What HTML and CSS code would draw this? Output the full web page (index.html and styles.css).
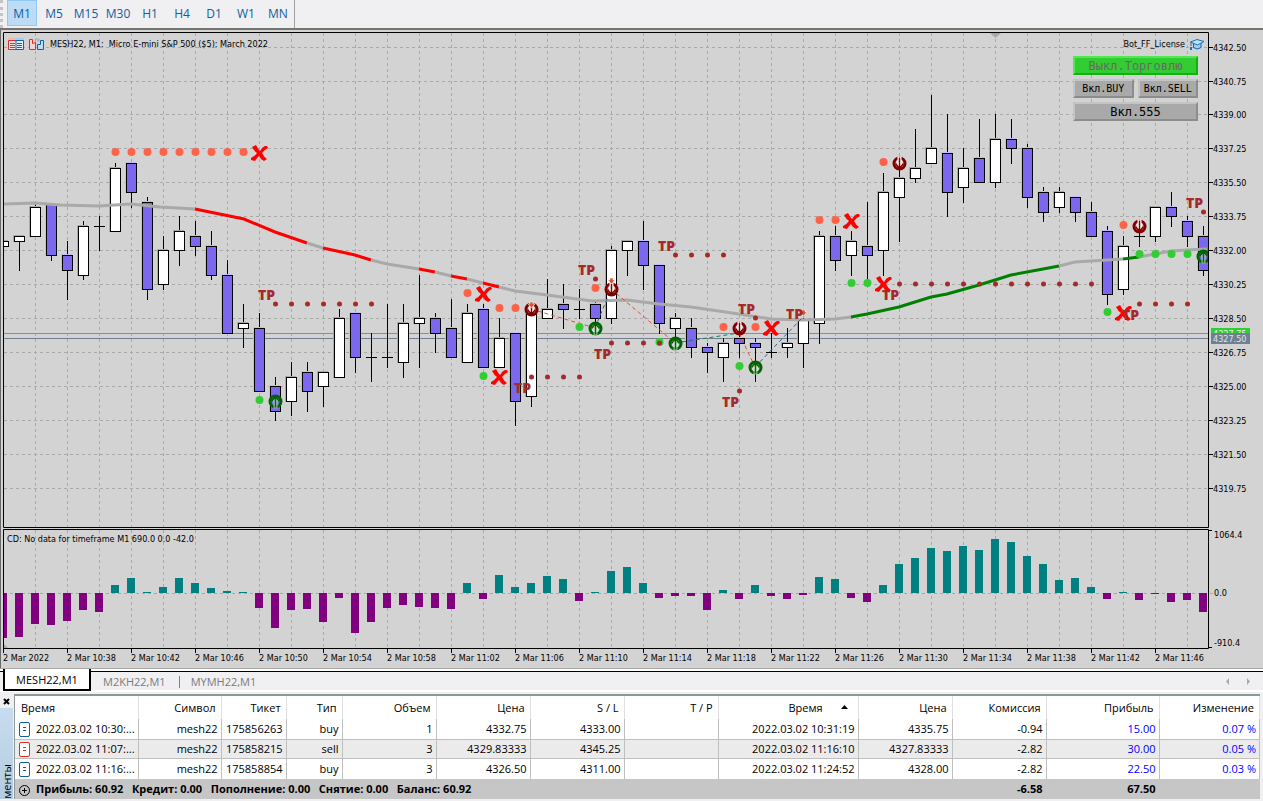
FILE: index.html
```html
<!DOCTYPE html>
<html lang="ru">
<head>
    <meta charset="UTF-8">
    <meta name="viewport" content="width=device-width, initial-scale=1.0">
    <title>MESH22, M1</title>
    <link rel="stylesheet" href="styles.css">
</head>
<body>

<nav class="toolbar">
    <button class="tf active">M1</button>
    <button class="tf">M5</button>
    <button class="tf">M15</button>
    <button class="tf">M30</button>
    <button class="tf">H1</button>
    <button class="tf">H4</button>
    <button class="tf">D1</button>
    <button class="tf">W1</button>
    <button class="tf">MN</button>
</nav>

<main class="chart">
    <svg id="chart" viewBox="0 30 1263 638"></svg>

    <div class="chart-title">
        <svg width="16" height="13" viewBox="0 0 16 13">
            <rect x="0" y="0" width="8" height="2" fill="#f0b8b4"/>
            <rect x="8" y="0" width="8" height="2" fill="#a9cde6"/>
            <path d="M8 2.500H.5v9H8" fill="#f7e4e2" stroke="#d9302c"/>
            <path d="M8 2.500h7.500v9H8z" fill="#e4f1fa" stroke="#0f63a8"/>
            <path d="M2 5.500h5M2 7.500h5M2 9.500h5" stroke="#d9302c"/>
            <path d="M9 5.500h5M9 7.500h5M9 9.500h5" stroke="#0f63a8"/>
        </svg>
        <svg width="16" height="13" viewBox="0 0 16 13">
            <path d="M.5 1.500h3v4l3-1v7h-6z" fill="#f7d4d0" stroke="#d9302c"/>
            <path d="M6 1h4v2H8" fill="none" stroke="#a9a9a9"/>
            <path d="M8.500 11.500v-5h3v-4h3v9z" fill="#b9dcf2" stroke="#0f63a8"/>
        </svg>
        <span>MESH22, M1:&nbsp; Micro E-mini S&amp;P 500 ($5): March 2022</span>
    </div>

    <div class="expert">
        <span>Bot_FF_License</span>
        <svg width="16" height="13" viewBox="0 0 16 13">
            <path d="M4.500 5v4.500q4 3 7.500 0V5" fill="#9fd2f2" stroke="#0f63a8"/>
            <path d="M1.500 4L8 1.500 15 3.500 8.500 7z" fill="#bfe4fa" stroke="#1673b8"/>
            <path d="M2 4v4" stroke="#1673b8"/>
            <path d="M1 9h2v3H1z" fill="#1673b8"/>
        </svg>
    </div>

    <div class="bot-panel">
        <button class="bot-btn on">Выкл.Торговлю</button>
        <button class="bot-btn small">Вкл.BUY</button>
        <button class="bot-btn small">Вкл.SELL</button>
        <button class="bot-btn wide">Вкл.555</button>
    </div>

    <div class="indicator-title">CD: No data for timeframe M1 690.0 0.0 -42.0</div>
</main>

<div class="tabs">
    <button class="tab active">MESH22,M1</button>
    <button class="tab">M2KH22,M1</button>
    <button class="tab">MYMH22,M1</button>
    <svg class="tab-arrows" width="26" height="9" viewBox="0 0 26 9">
        <path d="M4 1v7L1 4.500zM22 1v7l3-3.500z" fill="#a9a9a9"/>
    </svg>
</div>

<section class="terminal">
    <div class="side">
        <button class="close" aria-label="Закрыть">
            <svg width="7" height="7" viewBox="0 0 7 7"><path d="M1 1l5 5M6 1L1 6" stroke="#000" stroke-width="2"/></svg>
        </button>
        <div class="side-label"><span>менты</span></div>
    </div>
    <table class="history">
        <colgroup>
            <col class="c-time"><col class="c-symbol"><col class="c-ticket"><col class="c-type">
            <col class="c-num"><col class="c-num"><col class="c-num"><col class="c-num">
            <col class="c-close"><col class="c-num"><col class="c-num"><col class="c-profit"><col>
        </colgroup>
        <thead>
            <tr>
                <th class="left">Время</th>
                <th>Символ</th>
                <th>Тикет</th>
                <th>Тип</th>
                <th>Объем</th>
                <th>Цена</th>
                <th>S / L</th>
                <th>T / P</th>
                <th class="sorted">Время<svg width="7" height="4" viewBox="0 0 7 4"><path d="M0 4h7L3.500 0z"/></svg></th>
                <th>Цена</th>
                <th>Комиссия</th>
                <th>Прибыль</th>
                <th>Изменение</th>
            </tr>
        </thead>
        <tbody>
            <tr>
                <td class="left"><svg class="doc buy" width="11" height="15" viewBox="0 0 11 15"><rect x=".5" y=".5" width="10" height="14" rx="1.500"/><path d="M4 5.500h3M4 8.500h3"/></svg>2022.03.02 10:30:...</td>
                <td>mesh22</td><td>175856263</td><td>buy</td><td>1</td><td>4332.75</td><td>4333.00</td><td></td>
                <td>2022.03.02 10:31:19</td><td>4335.75</td><td>-0.94</td>
                <td class="plus">15.00</td><td class="plus">0.07 %</td>
            </tr>
            <tr>
                <td class="left"><svg class="doc sell" width="11" height="15" viewBox="0 0 11 15"><rect x=".5" y=".5" width="10" height="14" rx="1.500"/><path d="M4 5.500h3M4 8.500h3"/></svg>2022.03.02 11:07:...</td>
                <td>mesh22</td><td>175858215</td><td>sell</td><td>3</td><td>4329.83333</td><td>4345.25</td><td></td>
                <td>2022.03.02 11:16:10</td><td>4327.83333</td><td>-2.82</td>
                <td class="plus">30.00</td><td class="plus">0.05 %</td>
            </tr>
            <tr>
                <td class="left"><svg class="doc buy" width="11" height="15" viewBox="0 0 11 15"><rect x=".5" y=".5" width="10" height="14" rx="1.500"/><path d="M4 5.500h3M4 8.500h3"/></svg>2022.03.02 11:16:...</td>
                <td>mesh22</td><td>175858854</td><td>buy</td><td>3</td><td>4326.50</td><td>4311.00</td><td></td>
                <td>2022.03.02 11:24:52</td><td>4328.00</td><td>-2.82</td>
                <td class="plus">22.50</td><td class="plus">0.03 %</td>
            </tr>
        </tbody>
        <tfoot>
            <tr>
                <td class="left" colspan="10"><svg class="plus-icon" width="11" height="11" viewBox="0 0 11 11"><circle cx="5.500" cy="5.500" r="5"/><path d="M3 5.500h5M5.500 3v5"/></svg>Прибыль: 60.92&nbsp;&nbsp; Кредит: 0.00&nbsp;&nbsp; Пополнение: 0.00&nbsp;&nbsp; Снятие: 0.00&nbsp;&nbsp; Баланс: 60.92</td>
                <td>-6.58</td>
                <td>67.50</td>
                <td></td>
            </tr>
        </tfoot>
    </table>
</section>

<script src="chart.js"></script>
</body>
</html>
```
FILE: styles.css
```css
* {
    box-sizing: border-box;
}
body {
    margin: 0;
    background-color: #f0eff2;
    font-family: "Open Sans", "Noto Sans", sans-serif;
    font-size: 11px;
    color: #000;
}
button {
    font-family: inherit;
    padding: 0;
    margin: 0;
    border: none;
    background: none;
    cursor: pointer;
}
svg {
    display: block;
}

/* Timeframes */
.toolbar {
    display: flex;
    gap: 2px;
    width: 295px;
    height: 28px;
    padding-left: 4px;
    border-left: 3px dotted #c4c4c8;
    border-right: 1px solid #a0a0a0;
}
.tf {
    width: 30px;
    height: 26px;
    font-size: 12px;
    color: #0f5f9f;
    border: 1px solid transparent;
}
.tf.active {
    background-color: #bcdcf6;
    border-color: #90c8f6;
}

/* Chart */
.chart {
    position: relative;
    border-top: 2px solid #75756f;
    background-color: #d3d3d3;
    font-family: "DejaVu Sans Condensed", "DejaVu Sans", sans-serif;
    font-size: 9px;
}
#chart {
    width: 100%;
    height: auto;
}
#chart text {
    font-size: 9px;
}
#chart .tp {
    font-family: "Open Sans", sans-serif;
    font-size: 14px;
    font-weight: 800;
    font-stretch: normal;
    fill: #a52a2a;
}
.grid {
    stroke: #a9a9a9;
    stroke-dasharray: 3 3;
}
.chart-title,
.expert {
    position: absolute;
    top: 7px;
    display: flex;
    align-items: center;
    gap: 5px;
    height: 14px;
}
.chart-title {
    left: 8px;
}
.expert {
    right: 58px;
    gap: 4px;
}
.indicator-title {
    position: absolute;
    left: 7px;
    bottom: 123px;
    line-height: 12px;
}
.bot-panel {
    position: absolute;
    top: 26px;
    right: 65px;
    width: 125px;
    display: grid;
    grid-template-columns: 1fr 1fr;
    gap: 4px;
}
.bot-btn {
    height: 19px;
    font-family: "DejaVu Sans Mono", monospace;
    font-size: 12px;
    line-height: 14px;
    background-color: #a9a9a9;
    border: 2px solid;
    border-color: #c4c4c4 #8c8c8c #8c8c8c #c4c4c4;
}
.bot-btn.on {
    grid-column: span 2;
    background-color: #32cd32;
    border-color: #50ea50 #12b012 #12b012 #50ea50;
    color: #696969;
}
.bot-btn.small {
    font-size: 10px;
}
.bot-btn.wide {
    grid-column: span 2;
}

/* Chart tabs */
.tabs {
    display: flex;
    height: 24px;
    padding: 0 12px 0 3px;
    border-top: 1px solid #a9a9a9;
    background: linear-gradient(#fff 2px, #000 2px, #000 3px, #f0eff2 3px);
    border-bottom: 2px solid #fff;
}
.tab {
    height: 19px;
    margin: 3px 0 0;
    padding: 0 13px 0 12px;
    color: #7a7a7a;
    font-size: 11px;
}
.tab + .tab + .tab {
    background: linear-gradient(#808080, #808080) 0 4px / 1px 12px no-repeat;
}
.tab.active {
    height: 22px;
    margin: 0;
    width: 88px;
    background-color: #fff;
    border: 2px solid #000;
    border-top: none;
    padding: 0;
    color: #000;
}
.tab-arrows {
    margin: 8px 0 0 auto;
}

/* Trade history */
.terminal {
    display: flex;
    margin-top: 2px;
    padding-right: 3px;
}
.side {
    width: 14px;
    display: flex;
    flex-direction: column;
}
.close {
    width: 12px;
    height: 14px;
    display: flex;
    align-items: center;
    justify-content: center;
}
.side-label {
    flex: 1;
    width: 13px;
    background: linear-gradient(#c8dcf0, #b4cce0);
    display: flex;
    align-items: flex-end;
}
.side-label span {
    writing-mode: vertical-rl;
    transform: rotate(180deg);
    line-height: 13px;
}
.history {
    flex: 1;
    table-layout: fixed;
    border-collapse: separate;
    border-spacing: 0;
    border-top: 2px solid #8c9996;
    border-left: 1px solid #8c9996;
    background-color: #fff;
}
.c-time { width: 121px; }
.c-symbol { width: 83px; }
.c-ticket { width: 65px; }
.c-type { width: 56px; }
.c-num { width: 94px; }
.c-close { width: 140px; }
.c-profit { width: 113px; }
.history th,
.history td {
    height: 20px;
    padding: 0 3px 0 0;
    text-align: right;
    white-space: nowrap;
    line-height: 16px;
    border-right: 1px solid #c0c0c0;
}
.history th {
    height: 23px;
    padding-right: 5px;
    font-weight: normal;
    border-color: #e0e0e0;
}
.history th.left {
    padding-left: 6px;
    text-align: left;
}
.history td.left {
    padding-left: 4px;
    text-align: left;
}
.history th.sorted {
    padding-right: 10px;
}
.sorted svg {
    display: inline-block;
    margin: 0 0 3px 18px;
}
.history tbody tr:nth-child(2) td {
    background-color: #ecebeb;
    border-top: 1px solid #c0c0c0;
    border-bottom: 1px solid #c0c0c0;
}
.history .plus {
    color: #0000ff;
}
.doc,
.plus-icon {
    display: inline-block;
    vertical-align: middle;
    margin-right: 6px;
    fill: #fff;
}
.doc.buy {
    stroke: #0f5f9f;
}
.doc.sell {
    stroke: #d9302c;
}
.plus-icon {
    fill: none;
    stroke: #000;
}
.history tfoot td {
    background-color: #c6c6c6;
    border-color: #c6c6c6;
    font-weight: bold;
}
```
FILE: chart.js
```js
const FIRST_X = 3;
const STEP = 16;
const RIGHT = 1208;
const ZERO = 593;

// [up/down/doji, high, body top, body bottom, low]
const candles = [
    ['u', 241, 241, 247, 247], ['u', 236, 236, 242, 271], ['u', 204, 207, 237, 237], ['d', 204, 204, 256, 261],
    ['d', 241, 255, 271, 300], ['u', 221, 226, 276, 280], ['x', 216, 226, 226, 251], ['u', 163, 168, 232, 232],
    ['d', 163, 163, 193, 208], ['d', 197, 202, 290, 300], ['u', 236, 250, 285, 290], ['u', 216, 231, 251, 266],
    ['d', 221, 236, 247, 256], ['d', 231, 246, 276, 280], ['d', 260, 275, 334, 334], ['u', 304, 323, 329, 348],
    ['d', 313, 328, 392, 392], ['d', 377, 386, 412, 421], ['u', 362, 377, 402, 416], ['d', 362, 372, 392, 412],
    ['u', 372, 372, 387, 407], ['u', 309, 318, 378, 378], ['d', 313, 313, 358, 373], ['x', 333, 357, 357, 382],
    ['x', 304, 357, 357, 368], ['u', 304, 323, 363, 378], ['u', 275, 318, 324, 368], ['d', 313, 318, 334, 353],
    ['d', 299, 328, 358, 358], ['u', 304, 313, 363, 363], ['d', 304, 309, 368, 368], ['u', 318, 338, 368, 368],
    ['d', 333, 333, 402, 426], ['u', 309, 314, 397, 407], ['u', 279, 309, 319, 319], ['d', 284, 304, 310, 329],
    ['x', 289, 309, 309, 319], ['d', 301, 304, 319, 328], ['u', 246, 250, 319, 324], ['u', 241, 241, 251, 276],
    ['d', 221, 241, 266, 290], ['d', 265, 265, 324, 334], ['u', 313, 318, 329, 340], ['d', 318, 328, 348, 358],
    ['d', 343, 347, 353, 373], ['u', 338, 343, 358, 382], ['d', 330, 338, 344, 358], ['d', 338, 343, 348, 382],
    ['x', 333, 352, 352, 358], ['u', 328, 343, 348, 358], ['u', 318, 320, 344, 368], ['u', 231, 236, 324, 344],
    ['d', 226, 236, 261, 271], ['u', 231, 241, 256, 276], ['d', 202, 246, 256, 280], ['u', 173, 192, 251, 276],
    ['u', 163, 178, 198, 242], ['u', 129, 168, 179, 183], ['u', 95, 148, 164, 164], ['d', 114, 153, 193, 217],
    ['u', 148, 168, 188, 203], ['d', 119, 158, 183, 183], ['u', 114, 139, 183, 188], ['d', 119, 139, 149, 164],
    ['d', 144, 148, 198, 208], ['d', 187, 192, 213, 222], ['u', 187, 192, 208, 213], ['d', 197, 197, 213, 222],
    ['d', 202, 212, 237, 237], ['d', 226, 231, 295, 305], ['u', 236, 246, 290, 295], ['x', 223, 236, 236, 247],
    ['u', 207, 207, 237, 242], ['d', 192, 207, 217, 227], ['d', 216, 221, 237, 247], ['d', 226, 236, 271, 276]
];

// Cumulative delta
const delta = [
    -45, -44, -31, -32, -28, -17, -19, 8, 15, 1, 6, 15, 10, 5, 2, 1, -15, -35, -17, -16,
    -29, -5, -40, -29, -15, -12, -14, -15, -16, 10, -6, 18, 6, 10, 17, 14, -8, 1, 22, 26,
    10, -5, -3, -3, -17, 3, -6, 8, -3, -6, -2, 16, 14, -5, -9, 8, 29, 35, 45, 42,
    47, 43, 54, 51, 37, 29, 13, 15, 6, -6, 1, -7, -1, -9, -7, -19
];

const average = [
    ['#a9a9a9', '4,203 35,202 60,204 99,205 131,203 160,206 195,208'],
    ['#ff0000', '195,208 244,218 275,231 307,242'],
    ['#a9a9a9', '307,242 323,247'],
    ['#ff0000', '323,247 355,254 371,259'],
    ['#a9a9a9', '371,259 387,263 419,268'],
    ['#ff0000', '419,268 435,271'],
    ['#a9a9a9', '435,271 451,275'],
    ['#ff0000', '451,275 467,278'],
    ['#a9a9a9', '467,278 483,282'],
    ['#ff0000', '483,282 499,286'],
    ['#a9a9a9', '499,286 515,290 547,294 592,300 627,299 659,303 691,306 739,313 771,318 803,319 835,318 851,316'],
    ['#008000', '851,316 867,313 899,306 931,296 947,293 979,284 1011,274 1043,268 1059,265'],
    ['#a9a9a9', '1059,265 1075,261 1091,260 1107,259 1123,258'],
    ['#008000', '1123,258 1139,256'],
    ['#a9a9a9', '1139,256 1155,253 1171,250 1187,249 1207,248']
];

// [first x, y, count]
const sellDots = [[115, 152, 9], [467, 293, 1], [499, 308, 2], [595, 288, 1], [723, 327, 1], [755, 327, 1], [819, 220, 2], [883, 162, 1], [1123, 225, 1]];
const buyDots = [[259, 400, 1], [483, 376, 1], [579, 327, 1], [659, 342, 1], [739, 366, 1], [851, 283, 2], [1107, 312, 1], [1139, 254, 4]];
const tpDots = [[275, 304, 7], [531, 377, 4], [595, 279, 1], [675, 255, 4], [611, 343, 4], [755, 318, 1], [739, 391, 1], [899, 284, 13], [1203, 212, 1], [1139, 304, 4]];
const tpLabels = [[258, 300], [578, 275], [658, 251], [594, 359], [514, 393], [738, 314], [786, 319], [722, 407], [882, 300], [1186, 208], [1122, 320]];
const crosses = [[259, 153], [483, 294], [499, 377], [771, 328], [851, 221], [883, 284], [1123, 313]];
const sells = [[531, 309], [611, 289], [739, 328], [899, 163], [1139, 226]];
const buys = [[275, 401], [595, 328], [675, 343], [755, 367], [1203, 256]];
const deals = [
    [531, 309, 595, 328, '#e0502d'], [595, 328, 611, 289, '#30609a'], [611, 289, 675, 343, '#e0502d'],
    [675, 343, 739, 333, '#108060'], [739, 333, 755, 367, '#e0502d'], [755, 367, 803, 317, '#30609a']
];

let out = '';

function rect(x, y, w, h, fill) {
    out += `<rect x="${x}" y="${y}" width="${w}" height="${h}" fill="${fill}"/>`;
}

function text(x, y, str, fill = '#000') {
    out += `<text x="${x}" y="${y}" fill="${fill}">${str}</text>`;
}

function dots(list, r, fill) {
    list.forEach(([x, y, count]) => {
        for (let i = 0; i < count; i++) {
            out += `<circle cx="${x + i * STEP + 0.5}" cy="${y}" r="${r}" fill="${fill}"/>`;
        }
    });
}

function drawGrid() {
    for (let x = 35; x < RIGHT; x += 32) {
        out += `<path class="grid" d="M${x + 0.5} 33V527M${x + 0.5} 530V648"/>`;
    }
    for (let i = 0; i < 14; i++) {
        const y = i < 2 ? 47 + i * 34 : 46 + i * 34;
        out += `<path class="grid" d="M4 ${y + 0.5}H${RIGHT}"/>`;
        rect(RIGHT, y, 5, 1, '#000');
        text(1213, y + 4, (4342.5 - i * 1.75).toFixed(2));
    }
    out += `<path class="grid" d="M4 ${ZERO + 0.5}H1213"/>`;
    rect(4, 333, RIGHT - 4, 1, '#32cd32');
    rect(4, 338, RIGHT - 4, 1, '#708090');
}

function drawCandles() {
    candles.forEach(([type, high, top, bottom, low], i) => {
        const x = FIRST_X + i * STEP;
        rect(x, high, 1, low - high, '#000');
        if (type === 'x') {
            rect(x - 5, top, 11, 1, '#000');
            return;
        }
        rect(x - 6, top - 1, 11, bottom - top + 1, type === 'u' ? '#a9a9a9' : '#c3bdf0');
        rect(x - 5, top, 11, bottom - top, '#000');
        rect(x - 4, top + 1, 9, bottom - top - 2, type === 'u' ? '#fff' : '#7b68ee');
    });
}

function drawDelta() {
    delta.forEach((v, i) => {
        const x = FIRST_X + i * STEP - 4;
        rect(x, v > 0 ? ZERO - v : ZERO, 8, Math.abs(v), v > 0 ? '#008080' : '#800080');
    });
}

function drawMarkers() {
    deals.forEach(([x1, y1, x2, y2, color]) => {
        out += `<path d="M${x1} ${y1}L${x2} ${y2}" stroke="${color}" stroke-dasharray="4 3"/>`;
    });
    dots(sellDots, 4, '#ff6347');
    dots(buyDots, 4, '#32cd32');
    dots(tpDots, 2.5, '#a52a2a');
    crosses.forEach(([x, y]) => {
        out += `<path transform="translate(${x} ${y})" d="M-7-6l4-2q2 4 4 6q2-4 5-5h2l1 2q-4 2-6 5q2 4 5 6l-3 2q-4-2-5-5q-3 3-4 5l-4-1v-2q4-2 6-5q-3-2-5-6z" fill="#f00"/>`;
    });
    sells.forEach(([x, y]) => {
        out += `<g transform="translate(${x + 0.5} ${y + 0.5})"><circle r="5.500" fill="#d3d3d3" stroke="#800000" stroke-width="3"/>
            <path d="M-2-7h4v7h2L0 5l-4-5h2z" fill="#fff"/><path d="M-4 0L0 5l4-5M0-6V4" fill="none" stroke="#800000" stroke-width="1.500"/></g>`;
    });
    buys.forEach(([x, y]) => {
        out += `<g transform="translate(${x + 0.5} ${y + 0.5})"><circle r="5.500" fill="none" stroke="#006400" stroke-width="3"/>
            <path d="M-2 7v-7h-2L0-5l4 5h-2v7" fill="#e0efe4" fill-opacity=".6"/><path d="M-4 0L0-5l4 5M0-4v10" fill="none" stroke="#006400" stroke-width="1.500"/></g>`;
    });
    [[531, 305], [611, 281], [803, 313]].forEach(([x, y]) => {
        out += `<path transform="translate(${x} ${y})" d="M-1-3h3v2h2L.5 3-3-1h2z" fill="#e0502d" stroke="#fff" stroke-width=".5"/>`;
    });
    tpLabels.forEach(([x, y]) => {
        out += `<text class="tp" x="${x}" y="${y}">TP</text>`;
    });
}

function drawFrames() {
    out += `<path d="M3.500 32.500H${RIGHT + 0.5}V527.500H3.500zM3.500 529.500H${RIGHT + 0.5}V648.500H3.500z" fill="none" stroke="#000"/>`;
    out += '<path d="M990 33h11l-5.500 5zM4 644l4 4h-4z" fill="#a9a9a9"/>';
    rect(0, 30, 1, 638, '#696969');

    rect(RIGHT, 530, 4, 1, '#000');
    rect(RIGHT, 647, 4, 1, '#000');
    text(1214, 538, '1064.4');
    text(1214, 596, '0.0');
    text(1214, 646, '-910.4');

    rect(1211, 328, 39, 11, '#32cd32');
    text(1213, 337, '4327.75', '#e8f5e8');
    rect(1211, 333, 39, 11, '#708090');
    text(1213, 342, '4327.50', '#e0e4e8');

    rect(3, 648, 1, 5, '#000');
    text(3, 661, '2 Mar 2022');
    for (let i = 0; i < 18; i++) {
        const x = 67 + i * 64;
        const min = 638 + i * 4;
        rect(x, 648, 1, 5, '#000');
        text(x, 661, `2 Mar ${Math.floor(min / 60)}:${String(min % 60).padStart(2, '0')}`);
    }
}

out += '<clipPath id="plot"><rect x="4" y="33" width="1204" height="615"/></clipPath>';
drawGrid();
out += '<g clip-path="url(#plot)">';
drawCandles();
drawDelta();
average.forEach(([color, points]) => {
    out += `<polyline points="${points}" fill="none" stroke="${color}" stroke-width="3" transform="translate(0 1)"/>`;
});
drawMarkers();
out += '</g>';
drawFrames();

document.getElementById('chart').innerHTML = out;
```
